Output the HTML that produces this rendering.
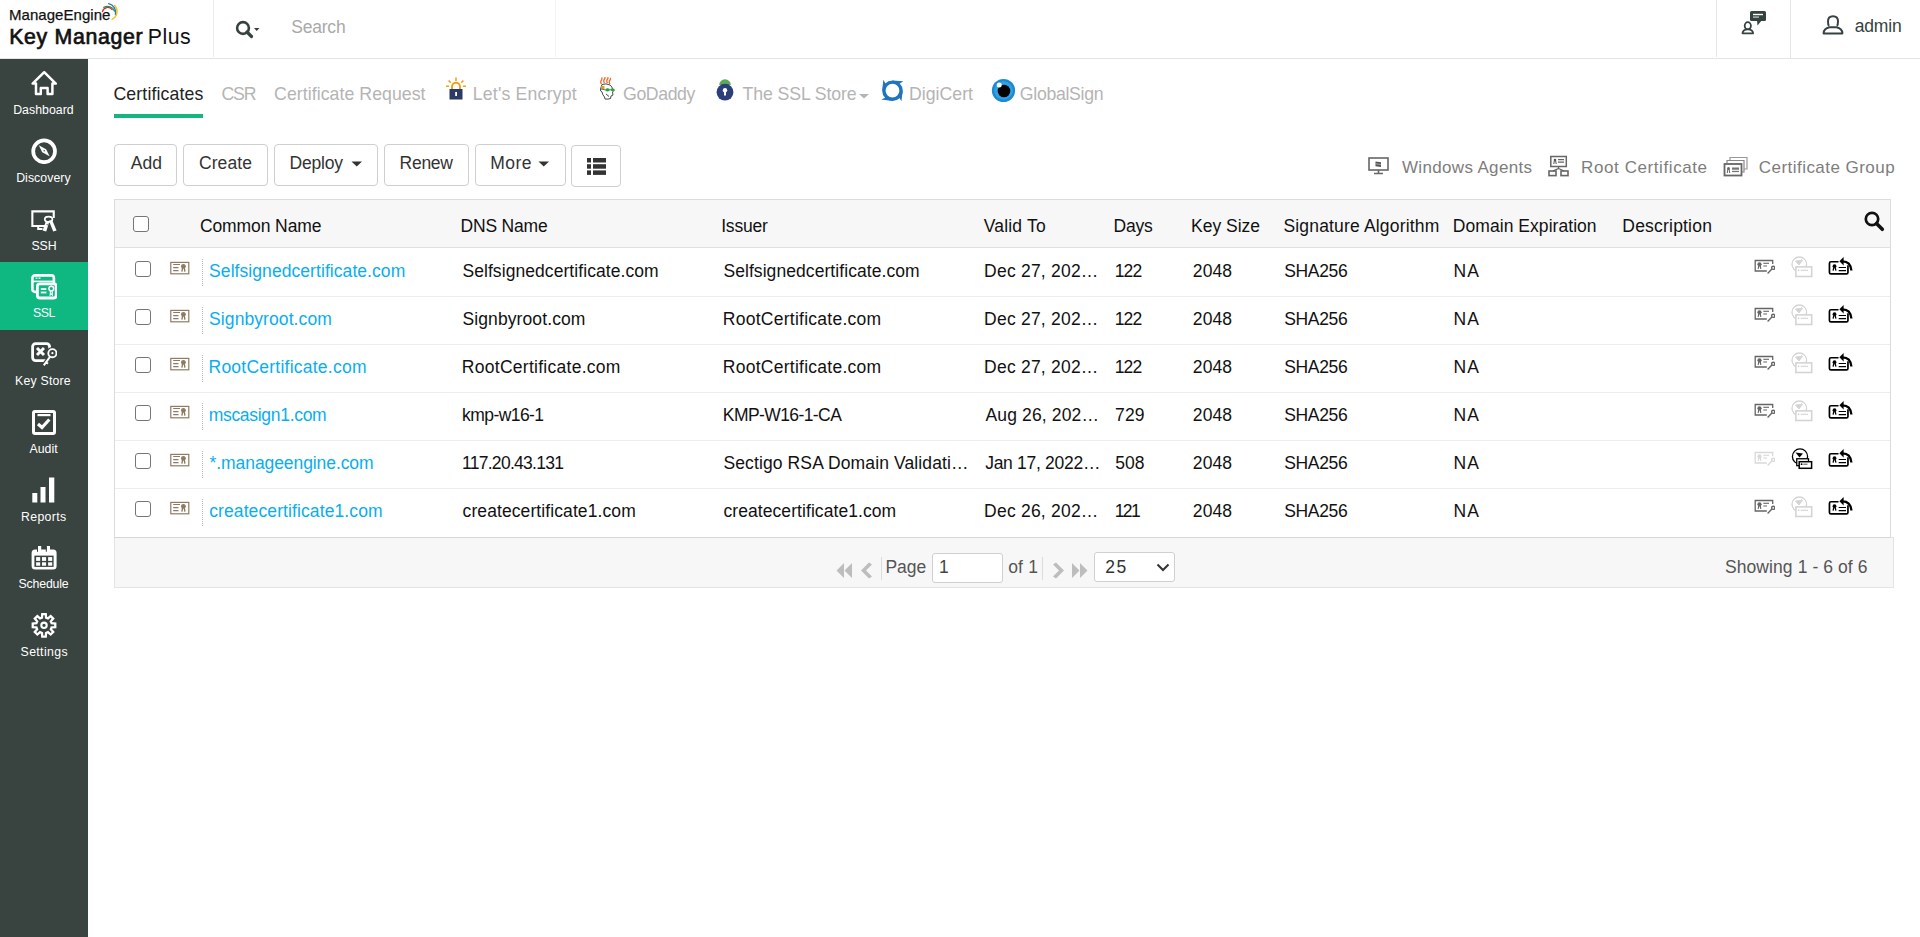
<!DOCTYPE html>
<html><head><meta charset="utf-8"><title>Key Manager Plus</title>
<style>
html,body{margin:0;padding:0;width:1920px;height:937px;overflow:hidden;background:#fff;font-family:"Liberation Sans",sans-serif;}
.t{position:absolute;white-space:nowrap;}
.r{position:absolute;display:block;}
</style></head><body>
<div class="r" style="left:0px;top:58px;width:1920px;height:1px;background:#e4e4e4"></div>
<div class="t" style="left:9.00px;top:7px;font-size:15px;line-height:15px;color:#111;font-weight:normal;letter-spacing:0.045px;-webkit-text-stroke:0.25px #111">ManageEngine</div>
<svg class="r" style="left:96px;top:0px" width="28" height="24" viewBox="0 0 28 24"><g transform="translate(-96 0)" fill="none" stroke-linecap="round">
<path d="M102.4 11.6 A5.6 5.6 0 0 1 112.2 9.6" stroke="#d9293a" stroke-width="1.3"/>
<path d="M103.8 7.4 A7.4 7.4 0 0 1 114.6 11.2" stroke="#1e9a48" stroke-width="1.3"/>
<path d="M108.6 3.6 A9 9 0 0 1 115.4 14.6" stroke="#1f78c1" stroke-width="1.3"/>
<path d="M114.6 5.6 A8.6 8.6 0 0 1 112 19.4" stroke="#f6c21c" stroke-width="1.5"/>
</g></svg>
<div class="t" style="left:9.20px;top:27px;font-size:21.3px;line-height:21.3px;color:#111;font-weight:normal;letter-spacing:0.670px;-webkit-text-stroke:0.7px #111">Key Manager</div>
<div class="t" style="left:147.70px;top:27px;font-size:21.3px;line-height:21.3px;color:#111;font-weight:normal;letter-spacing:0.533px;">Plus</div>
<div class="r" style="left:213px;top:0px;width:1px;height:57px;background:#ececec"></div>
<div class="r" style="left:555px;top:0px;width:1px;height:57px;background:#f3f3f3"></div>
<div class="r" style="left:1716px;top:0px;width:1px;height:57px;background:#e6e6e6"></div>
<div class="r" style="left:1790px;top:0px;width:1px;height:58px;background:#e6e6e6"></div>
<svg class="r" style="left:235px;top:20px" width="26" height="20" viewBox="0 0 26 20">
<circle cx="8" cy="8" r="5.9" stroke="#364240" stroke-width="2.6" fill="none"/>
<path d="M12 12 L16.5 16.5" stroke="#364240" stroke-width="3.2" stroke-linecap="round"/>
<path d="M19 8 L24.5 8 L21.75 11 Z" fill="#364240"/>
</svg>
<div class="t" style="left:291.20px;top:19px;font-size:17.5px;line-height:17.5px;color:#a9a9a9;font-weight:normal;letter-spacing:-0.200px;">Search</div>
<svg class="r" style="left:1741px;top:10px" width="26" height="25" viewBox="0 0 26 25">
<rect x="9" y="1" width="16" height="10" rx="1.5" fill="#364240"/>
<path d="M16 10 L21 10 L16.5 15.5 Z" fill="#364240"/>
<rect x="12" y="3.8" width="10" height="1.4" fill="#fff"/>
<rect x="12" y="6.4" width="6" height="1.4" fill="#bbb"/>
<ellipse cx="6.8" cy="15.8" rx="3.1" ry="3.6" stroke="#364240" stroke-width="1.8" fill="#fff"/>
<path d="M1.5 23.3 Q1.8 19.3 6.8 19.3 Q11.8 19.3 12.1 23.3 Z" stroke="#364240" stroke-width="1.8" fill="#fff" stroke-linejoin="round"/>
</svg>
<svg class="r" style="left:1822px;top:15px" width="22" height="20" viewBox="0 0 22 20">
<path d="M7 11 Q6 10 6 6.3 Q6 1.3 11 1.3 Q16 1.3 16 6.3 Q16 10 15 11" stroke="#364240" stroke-width="2" fill="none"/>
<path d="M1.6 18.4 Q1.8 13.4 7.5 12.3 L14.5 12.3 Q20.2 13.4 20.4 18.4 Z" stroke="#364240" stroke-width="2" fill="none" stroke-linejoin="round"/>
</svg>
<div class="t" style="left:1854.80px;top:18px;font-size:17.5px;line-height:17.5px;color:#364240;font-weight:normal;letter-spacing:-0.200px;">admin</div>
<div class="r" style="left:0px;top:59px;width:88px;height:878px;background:#39433f"></div>
<div class="r" style="left:0px;top:262px;width:88px;height:68px;background:#10b881"></div>
<svg class="r" style="left:31px;top:70px" width="26" height="26" viewBox="0 0 26 26"><path d="M5 24 L5 13.6 L1.6 13.6 L13.2 2.2 L24.8 13.6 L21.4 13.6 L21.4 24 L16.6 24 L16.6 18 L9.8 18 L9.8 24 Z" stroke="#ffffff" stroke-width="2.5" fill="none" stroke-linejoin="round"/></svg>
<div class="t" style="left:13.20px;top:104px;font-size:12.3px;line-height:12.3px;color:#fff;font-weight:normal;letter-spacing:0.038px;">Dashboard</div>
<svg class="r" style="left:31px;top:138px" width="26" height="26" viewBox="0 0 26 26"><circle cx="13.1" cy="13.3" r="10.9" stroke="#ffffff" stroke-width="3.7" fill="none"/>
<path d="M7.8 7.3 L15.1 11.3 L18.6 18.2 L11.2 14.2 Z" fill="#ffffff"/><circle cx="13.2" cy="12.8" r="0.7" fill="#39433f"/></svg>
<div class="t" style="left:16.20px;top:172px;font-size:12.3px;line-height:12.3px;color:#fff;font-weight:normal;letter-spacing:0.050px;">Discovery</div>
<svg class="r" style="left:31px;top:209px" width="26" height="26" viewBox="0 0 26 26"><path d="M15.5 17 L1.35 17 L1.35 2.4 L22.75 2.4 L22.75 9" stroke="#ffffff" stroke-width="2.1" fill="none"/>
<path d="M7.2 17 L7.2 20 L11.5 20" stroke="#ffffff" stroke-width="2" fill="none"/>
<ellipse cx="17.6" cy="10.2" rx="3.8" ry="2.6" stroke="#ffffff" stroke-width="1.7" fill="#39433f"/>
<path d="M14.8 12.2 L18.3 12.8 L15.2 22.6 L11.6 21.6 Z" fill="#ffffff"/>
<path d="M17.8 11.6 L21.2 11.2 L25.6 21.6 L22.2 22.6 Z" fill="#ffffff"/>
<path d="M15.6 15.5 L17.2 16" stroke="#39433f" stroke-width="0.8"/></svg>
<div class="t" style="left:31.50px;top:240px;font-size:12.3px;line-height:12.3px;color:#fff;font-weight:normal;letter-spacing:-0.100px;">SSH</div>
<svg class="r" style="left:31px;top:274px" width="26" height="26" viewBox="0 0 26 26"><rect x="1.4" y="1.4" width="21.5" height="16.5" rx="2.5" stroke="#ffffff" stroke-width="2.6" fill="none"/>
<rect x="2" y="6.6" width="20" height="1.6" fill="#ffffff"/>
<path d="M4.5 4.2 L6.5 4.2 M7.5 4.2 L9.5 4.2" stroke="#ffffff" stroke-width="1.2"/>
<rect x="6.4" y="9.8" width="18.8" height="14.2" rx="2.5" stroke="#ffffff" stroke-width="2.8" fill="#10b881"/>
<rect x="9.8" y="14.2" width="5.6" height="1.8" fill="#ffffff"/><rect x="9.8" y="17.6" width="5.6" height="1.8" fill="#ffffff"/>
<circle cx="20.3" cy="14.6" r="2.4" stroke="#ffffff" stroke-width="1.5" fill="none"/>
<path d="M19.4 16.8 L19.2 21 L20.3 20 L21.4 21 L21.2 16.8" stroke="#ffffff" stroke-width="1.1" fill="none"/></svg>
<div class="t" style="left:33.00px;top:307px;font-size:12.3px;line-height:12.3px;color:#fff;font-weight:normal;letter-spacing:-0.500px;">SSL</div>
<svg class="r" style="left:31px;top:342px" width="26" height="26" viewBox="0 0 26 26"><rect x="1.6" y="1.6" width="17" height="17" rx="3" stroke="#ffffff" stroke-width="2.8" fill="none"/>
<path d="M6 6 L13 13 M13 6 L6 13" stroke="#ffffff" stroke-width="3"/>
<path d="M19.2 14.5 L12.8 23.3" stroke="#39433f" stroke-width="4.5"/>
<circle cx="21.4" cy="11.2" r="4.3" stroke="#39433f" stroke-width="4" fill="#39433f"/>
<circle cx="21.4" cy="11.2" r="4.1" stroke="#ffffff" stroke-width="1.9" fill="#39433f"/>
<circle cx="21.4" cy="11.2" r="1.1" fill="#ffffff"/>
<path d="M19.2 14.5 L12.8 23.3 M15 20.3 L17 21.6" stroke="#ffffff" stroke-width="2.1"/></svg>
<div class="t" style="left:15.10px;top:375px;font-size:12.3px;line-height:12.3px;color:#fff;font-weight:normal;letter-spacing:0.200px;">Key Store</div>
<svg class="r" style="left:31px;top:410px" width="26" height="26" viewBox="0 0 26 26"><rect x="2.5" y="1.5" width="21" height="22" rx="1.5" stroke="#ffffff" stroke-width="3" fill="none"/>
<rect x="6.5" y="4" width="13" height="2.2" fill="#ffffff"/>
<path d="M7 14 L11 17.5 L18.3 9.5" stroke="#ffffff" stroke-width="3.2" fill="none"/></svg>
<div class="t" style="left:29.40px;top:443px;font-size:12.3px;line-height:12.3px;color:#fff;font-weight:normal;letter-spacing:0.050px;">Audit</div>
<svg class="r" style="left:31px;top:477px" width="26" height="26" viewBox="0 0 26 26"><rect x="1.3" y="16" width="5" height="9.5" fill="#ffffff"/><rect x="9.5" y="10" width="5" height="15.5" fill="#ffffff"/><rect x="18" y="0.5" width="5.3" height="25" fill="#ffffff"/></svg>
<div class="t" style="left:21.00px;top:511px;font-size:12.3px;line-height:12.3px;color:#fff;font-weight:normal;letter-spacing:0.350px;">Reports</div>
<svg class="r" style="left:31px;top:546px" width="26" height="26" viewBox="0 0 26 26"><rect x="0.6" y="3.6" width="25" height="20" rx="3.5" fill="#ffffff"/>
<rect x="7" y="0" width="3.2" height="6.2" fill="#ffffff"/><rect x="15.8" y="0" width="3.2" height="6.2" fill="#ffffff"/>
<rect x="6" y="0.8" width="1" height="5" fill="#39433f"/><rect x="14.8" y="0.8" width="1" height="5" fill="#39433f"/>
<rect x="3.4" y="9.6" width="19.2" height="11.3" fill="#39433f"/>
<rect x="5.1" y="11.1" width="4.1" height="3.8" fill="#ffffff"/><rect x="11" y="11.1" width="4.1" height="3.8" fill="#ffffff"/><rect x="17.1" y="11.1" width="4.1" height="3.8" fill="#ffffff"/>
<rect x="5.1" y="16.3" width="4.1" height="3.4" fill="#ffffff"/><rect x="11" y="16.3" width="4.1" height="3.4" fill="#ffffff"/><rect x="17.1" y="16.3" width="4.1" height="3.4" fill="#ffffff"/></svg>
<div class="t" style="left:18.50px;top:578px;font-size:12.3px;line-height:12.3px;color:#fff;font-weight:normal;letter-spacing:-0.157px;">Schedule</div>
<svg class="r" style="left:31px;top:612px" width="26" height="26" viewBox="0 0 26 26"><path d="M10.96 5.67 L11.22 2.04 L14.78 2.04 L15.04 5.67 L16.95 6.46 L19.70 4.08 L22.22 6.60 L19.84 9.35 L20.63 11.26 L24.26 11.52 L24.26 15.08 L20.63 15.34 L19.84 17.25 L22.22 20.00 L19.70 22.52 L16.95 20.14 L15.04 20.93 L14.78 24.56 L11.22 24.56 L10.96 20.93 L9.05 20.14 L6.30 22.52 L3.78 20.00 L6.16 17.25 L5.37 15.34 L1.74 15.08 L1.74 11.52 L5.37 11.26 L6.16 9.35 L3.78 6.60 L6.30 4.08 L9.05 6.46 Z" stroke="#ffffff" stroke-width="2.3" fill="none" stroke-linejoin="miter"/>
<circle cx="13" cy="13.3" r="2.7" stroke="#ffffff" stroke-width="2.1" fill="none"/></svg>
<div class="t" style="left:20.60px;top:646px;font-size:12.3px;line-height:12.3px;color:#fff;font-weight:normal;letter-spacing:0.357px;">Settings</div>
<div class="t" style="left:113.40px;top:86px;font-size:17.7px;line-height:17.7px;color:#222;font-weight:normal;letter-spacing:0.145px;">Certificates</div>
<div class="r" style="left:114px;top:114px;width:89px;height:4px;background:#14b57e"></div>
<div class="t" style="left:221.50px;top:86px;font-size:17.7px;line-height:17.7px;color:#b4b4b4;font-weight:normal;letter-spacing:-1.150px;">CSR</div>
<div class="t" style="left:274.10px;top:86px;font-size:17.7px;line-height:17.7px;color:#b4b4b4;font-weight:normal;letter-spacing:0.056px;">Certificate Request</div>
<svg class="r" style="left:445px;top:77px" width="22" height="24" viewBox="0 0 22 24">
<path d="M11 0.5 L11 4 M3.5 3.5 L5.8 5.8 M18.5 3.5 L16.2 5.8 M1 9.3 L4 9.3 M21 9.3 L18 9.3" stroke="#f4a11a" stroke-width="1.6"/>
<path d="M7 12 L7 9.8 A4 4 0 0 1 15 9.8 L15 12" stroke="#f4a11a" stroke-width="2" fill="none"/>
<rect x="4.5" y="12" width="13" height="10.5" fill="#2b3a67"/>
<rect x="10.2" y="15" width="1.8" height="4" fill="#fff"/>
</svg>
<div class="t" style="left:472.80px;top:86px;font-size:17.7px;line-height:17.7px;color:#b4b4b4;font-weight:normal;letter-spacing:0.183px;">Let's Encrypt</div>
<svg class="r" style="left:597px;top:77px" width="20" height="25" viewBox="0 0 20 25">
<path d="M4.5 7 Q3 5 4.5 3 Q5.5 1.5 4.5 0.5 M7.5 6 Q6 4 7.5 2 Q8.5 0.8 7.5 0 M10.5 6 Q9 4 10.5 2 Q11.5 0.8 10.5 0 M13 7 Q11.5 5 13 3 Q14 1.8 13 1" stroke="#ee6a2a" stroke-width="1.3" fill="none"/>
<path d="M5 7.5 Q9 6 13 8 Q15.5 10 15.5 12 L17 13.5 L15.5 15 L16 18 L14 19 L13.5 21.5 Q11 22.5 8 22 L7.5 20 Q5.5 18 5 15 Q3 14.5 3.5 12 Q4.5 9 5 7.5 Z" stroke="#333" stroke-width="0.9" fill="#fff"/>
<rect x="4.5" y="9" width="3" height="3" fill="#d9a520"/>
<ellipse cx="10.5" cy="12.8" rx="2.4" ry="1.6" fill="#22a33a"/><ellipse cx="15.5" cy="12.8" rx="2.2" ry="1.3" fill="#22a33a"/>
<path d="M8 12.8 L4 12 M12.8 12.8 L13.4 12.8" stroke="#333" stroke-width="0.7"/>
<path d="M9 17 L12 19.5" stroke="#333" stroke-width="0.9"/>
</svg>
<div class="t" style="left:623.10px;top:86px;font-size:17.7px;line-height:17.7px;color:#b4b4b4;font-weight:normal;letter-spacing:-0.417px;">GoDaddy</div>
<svg class="r" style="left:715px;top:77px" width="20" height="25" viewBox="0 0 20 25">
<path d="M4.2 8 A5.8 5.8 0 0 1 15.8 8 Z" fill="#5aa95a"/>
<circle cx="10" cy="15.2" r="8.4" fill="#2c3f7c"/>
<circle cx="10" cy="13.2" r="2.2" fill="#fff"/>
<rect x="9" y="13" width="2" height="5.5" fill="#fff"/>
</svg>
<div class="t" style="left:742.60px;top:86px;font-size:17.7px;line-height:17.7px;color:#b4b4b4;font-weight:normal;letter-spacing:-0.108px;">The SSL Store</div>
<svg class="r" style="left:858px;top:93px" width="12" height="6" viewBox="0 0 12 6"><path d="M1 1 L11 1 L6 5.5 Z" fill="#b4b4b4"/></svg>
<svg class="r" style="left:879px;top:78px" width="26" height="25" viewBox="0 0 26 25">
<circle cx="13.5" cy="12.7" r="8.6" stroke="#1f74c0" stroke-width="3.4" fill="none"/>
<path d="M3.2 13 L7.5 7.2 L4.3 1.8 Z" fill="#1f74c0"/>
<path d="M13 2.4 L19.5 6.2 L24.4 3.2 Z" fill="#1f74c0"/>
<path d="M23.8 12.5 L19.6 18.4 L22.4 23.2 Z" fill="#1f74c0"/>
<path d="M14 23 L7.4 19.3 L2.2 21.4 Z" fill="#1f74c0"/>
</svg>
<div class="t" style="left:909.00px;top:86px;font-size:17.7px;line-height:17.7px;color:#b4b4b4;font-weight:normal;letter-spacing:0.014px;">DigiCert</div>
<svg class="r" style="left:991px;top:78px" width="25" height="25" viewBox="0 0 25 25">
<circle cx="12.5" cy="12.5" r="11.6" fill="#1b8ad0"/>
<circle cx="12.5" cy="12.5" r="9.3" fill="#2fa2e6"/>
<circle cx="13" cy="13" r="6.3" fill="#050505"/>
<circle cx="8.2" cy="7" r="2.5" fill="#fff"/>
</svg>
<div class="t" style="left:1019.80px;top:86px;font-size:17.7px;line-height:17.7px;color:#b4b4b4;font-weight:normal;letter-spacing:-0.300px;">GlobalSign</div>
<div class="r" style="left:114px;top:144px;width:63px;height:42px;border:1px solid #cfcfcf;border-radius:4px;background:#fff;box-sizing:border-box"></div>
<div class="t" style="left:130.80px;top:155px;font-size:17.5px;line-height:17.5px;color:#333;font-weight:normal;">Add</div>
<div class="r" style="left:183px;top:144px;width:85px;height:42px;border:1px solid #cfcfcf;border-radius:4px;background:#fff;box-sizing:border-box"></div>
<div class="t" style="left:198.90px;top:155px;font-size:17.5px;line-height:17.5px;color:#333;font-weight:normal;letter-spacing:0.120px;">Create</div>
<div class="r" style="left:274px;top:144px;width:104px;height:42px;border:1px solid #cfcfcf;border-radius:4px;background:#fff;box-sizing:border-box"></div>
<div class="t" style="left:289.60px;top:155px;font-size:17.5px;line-height:17.5px;color:#333;font-weight:normal;letter-spacing:-0.200px;">Deploy</div>
<svg class="r" style="left:351px;top:161px" width="12" height="6" viewBox="0 0 12 6"><path d="M0.5 0.5 L11 0.5 L5.75 5.5 Z" fill="#333"/></svg>
<div class="r" style="left:384px;top:144px;width:85px;height:42px;border:1px solid #cfcfcf;border-radius:4px;background:#fff;box-sizing:border-box"></div>
<div class="t" style="left:399.60px;top:155px;font-size:17.5px;line-height:17.5px;color:#333;font-weight:normal;letter-spacing:-0.275px;">Renew</div>
<div class="r" style="left:475px;top:144px;width:91px;height:42px;border:1px solid #cfcfcf;border-radius:4px;background:#fff;box-sizing:border-box"></div>
<div class="t" style="left:490.30px;top:155px;font-size:17.5px;line-height:17.5px;color:#333;font-weight:normal;letter-spacing:0.467px;">More</div>
<svg class="r" style="left:538px;top:161px" width="12" height="6" viewBox="0 0 12 6"><path d="M0.5 0.5 L11 0.5 L5.75 5.5 Z" fill="#333"/></svg>
<div class="r" style="left:571px;top:145px;width:50px;height:42px;border:1px solid #cfcfcf;border-radius:4px;background:#fff;box-sizing:border-box"></div>
<svg class="r" style="left:587px;top:158px" width="19" height="17" viewBox="0 0 19 17">
<rect x="0" y="0" width="4" height="4.5" fill="#333"/><rect x="6" y="0" width="13" height="4.5" fill="#333"/>
<rect x="0" y="6.2" width="4" height="4.5" fill="#333"/><rect x="6" y="6.2" width="13" height="4.5" fill="#333"/>
<rect x="0" y="12.4" width="4" height="4.5" fill="#333"/><rect x="6" y="12.4" width="13" height="4.5" fill="#333"/>
</svg>
<svg class="r" style="left:1368px;top:157px" width="22" height="18" viewBox="0 0 22 18">
<rect x="1" y="1" width="19" height="12" stroke="#666" stroke-width="1.6" fill="none"/>
<path d="M10.5 13 L10.5 16 M6 16.5 L15 16.5" stroke="#666" stroke-width="1.6"/>
<path d="M7.5 4.5 L13 5.2 L13 10 L7.5 9.2 Z" fill="#555"/><path d="M7.5 6.8 L13 7.5" stroke="#ddd" stroke-width="0.6"/>
</svg>
<div class="t" style="left:1401.90px;top:159px;font-size:17px;line-height:17px;color:#7d7d7d;font-weight:normal;letter-spacing:0.346px;">Windows Agents</div>
<svg class="r" style="left:1548px;top:155px" width="22" height="22" viewBox="0 0 22 22">
<rect x="2.8" y="1.5" width="15.5" height="10" stroke="#666" stroke-width="1.5" fill="none"/>
<circle cx="7" cy="5" r="1.3" fill="#555"/><path d="M6.3 6 L5.8 9 M7.7 6 L8.2 9" stroke="#555" stroke-width="1"/>
<path d="M10 4.6 L16 4.6 M10 7.2 L16 7.2" stroke="#666" stroke-width="1.2"/>
<path d="M10.5 11.5 L10.5 13.5 L4.8 16 M10.5 13.5 L16.2 16" stroke="#666" stroke-width="1.3" fill="none"/>
<rect x="1" y="16" width="7" height="4.6" stroke="#666" stroke-width="1.6" fill="none"/>
<rect x="13" y="16" width="7" height="4.6" stroke="#666" stroke-width="1.6" fill="none"/>
</svg>
<div class="t" style="left:1581.10px;top:159px;font-size:17px;line-height:17px;color:#7d7d7d;font-weight:normal;letter-spacing:0.587px;">Root Certificate</div>
<svg class="r" style="left:1723px;top:156px" width="26" height="21" viewBox="0 0 26 21">
<path d="M7 4 L7 1.5 L24 1.5 L24 13 L21 13" stroke="#999" stroke-width="1.2" fill="none"/>
<path d="M4 7 L4 4.5 L21 4.5 L21 16 L18 16" stroke="#888" stroke-width="1.2" fill="none"/>
<rect x="1.5" y="8" width="17" height="11.5" stroke="#666" stroke-width="1.8" fill="#fff"/>
<circle cx="5.5" cy="12.5" r="1.5" fill="#666"/><path d="M4.8 13.5 L4.3 17 M6.2 13.5 L6.7 17" stroke="#666" stroke-width="1"/>
<rect x="9" y="11.5" width="7" height="2.2" fill="#777"/><rect x="9" y="14.8" width="7" height="1.3" fill="#777"/>
</svg>
<div class="t" style="left:1758.80px;top:159px;font-size:17px;line-height:17px;color:#7d7d7d;font-weight:normal;letter-spacing:0.456px;">Certificate Group</div>
<div class="r" style="left:114px;top:199px;width:1777px;height:339px;border:1px solid #dcdcdc;border-bottom-color:#d6d6d6;box-sizing:border-box;background:#fff"></div>
<div class="r" style="left:115px;top:200px;width:1775px;height:47px;background:#f7f7f7"></div>
<div class="r" style="left:115px;top:247px;width:1775px;height:1px;background:#e0e0e0"></div>
<div class="r" style="left:133px;top:216px;width:16px;height:16px;border:1px solid #767676;border-radius:3px;background:#fff;box-sizing:border-box"></div>
<div class="t" style="left:199.90px;top:218px;font-size:17.5px;line-height:17.5px;color:#111;font-weight:normal;letter-spacing:-0.090px;">Common Name</div>
<div class="t" style="left:460.60px;top:218px;font-size:17.5px;line-height:17.5px;color:#111;font-weight:normal;letter-spacing:-0.200px;">DNS Name</div>
<div class="t" style="left:721.20px;top:218px;font-size:17.5px;line-height:17.5px;color:#111;font-weight:normal;letter-spacing:-0.200px;">Issuer</div>
<div class="t" style="left:983.65px;top:218px;font-size:17.5px;line-height:17.5px;color:#111;font-weight:normal;letter-spacing:0.207px;">Valid To</div>
<div class="t" style="left:1113.60px;top:218px;font-size:17.5px;line-height:17.5px;color:#111;font-weight:normal;letter-spacing:-0.267px;">Days</div>
<div class="t" style="left:1191.10px;top:218px;font-size:17.5px;line-height:17.5px;color:#111;font-weight:normal;letter-spacing:-0.021px;">Key Size</div>
<div class="t" style="left:1283.45px;top:218px;font-size:17.5px;line-height:17.5px;color:#111;font-weight:normal;letter-spacing:0.169px;">Signature Algorithm</div>
<div class="t" style="left:1452.85px;top:218px;font-size:17.5px;line-height:17.5px;color:#111;font-weight:normal;letter-spacing:0.047px;">Domain Expiration</div>
<div class="t" style="left:1622.35px;top:218px;font-size:17.5px;line-height:17.5px;color:#111;font-weight:normal;letter-spacing:0.200px;">Description</div>
<svg class="r" style="left:1864px;top:211px" width="21" height="21" viewBox="0 0 21 21">
<circle cx="8" cy="8" r="6.2" stroke="#111" stroke-width="2.7" fill="none"/>
<path d="M12.5 12.5 L18.3 18.3" stroke="#111" stroke-width="3.6" stroke-linecap="round"/>
</svg>
<div class="r" style="left:115px;top:296px;width:1775px;height:1px;background:#ededed"></div>
<div class="r" style="left:135px;top:261px;width:16px;height:16px;border:1px solid #767676;border-radius:3px;background:#fff;box-sizing:border-box"></div>
<svg class="r" style="left:169px;top:261px" width="21" height="15" viewBox="0 0 21 15"><rect x="1.8" y="1.4" width="18" height="11.4" stroke="#8f7b5f" stroke-width="1.2" fill="#fff"/>
<path d="M4.2 3.5 L11 3.5 M4.2 6.6 L9.5 6.6 M4.2 9.6 L9.5 9.6" stroke="#8a7a66" stroke-width="1.1"/>
<circle cx="14.4" cy="5.3" r="2.4" fill="#8d7a5f"/><path d="M13.5 7 L12.9 10.7 M15.3 7 L15.9 10.7" stroke="#8d7a5f" stroke-width="1.4"/></svg>
<div class="r" style="left:202px;top:259px;width:1px;height:27px;border-left:1px dotted #b8b8b8;box-sizing:border-box"></div>
<div class="t" style="left:209.10px;top:263px;font-size:17.5px;line-height:17.5px;color:#08aef0;font-weight:normal;letter-spacing:0.067px;">Selfsignedcertificate.com</div>
<div class="t" style="left:462.45px;top:263px;font-size:17.5px;line-height:17.5px;color:#111;font-weight:normal;letter-spacing:0.069px;">Selfsignedcertificate.com</div>
<div class="t" style="left:723.40px;top:263px;font-size:17.5px;line-height:17.5px;color:#111;font-weight:normal;letter-spacing:0.071px;">Selfsignedcertificate.com</div>
<div class="t" style="left:984.10px;top:263px;font-size:17.5px;line-height:17.5px;color:#111;font-weight:normal;letter-spacing:0.218px;">Dec 27, 202…</div>
<div class="t" style="left:1114.70px;top:263px;font-size:17.5px;line-height:17.5px;color:#111;font-weight:normal;letter-spacing:-0.850px;">122</div>
<div class="t" style="left:1192.85px;top:263px;font-size:17.5px;line-height:17.5px;color:#111;font-weight:normal;letter-spacing:0.067px;">2048</div>
<div class="t" style="left:1284.20px;top:263px;font-size:17.5px;line-height:17.5px;color:#111;font-weight:normal;letter-spacing:-0.320px;">SHA256</div>
<div class="t" style="left:1453.60px;top:263px;font-size:17.5px;line-height:17.5px;color:#111;font-weight:normal;letter-spacing:0.950px;">NA</div>
<svg class="r" style="left:1752px;top:258px" width="23" height="17" viewBox="0 0 23 17"><path d="M20.7 6 L20.7 2.5 L3.2 2.5 L3.2 13 L14.8 13" stroke="#666" stroke-width="1.3" fill="none"/>
<circle cx="7.5" cy="6.3" r="2.1" fill="#666"/><path d="M6.8 7.6 L6.2 10.8 M8.2 7.6 L8.8 10.8" stroke="#666" stroke-width="1.2"/>
<path d="M11.3 5.3 L17 5.3" stroke="#666" stroke-width="1.1"/><path d="M11.3 8 L15 8" stroke="#999" stroke-width="1.5"/>
<circle cx="21.2" cy="9.8" r="1.6" stroke="#666" stroke-width="1.4" fill="none"/>
<path d="M19.9 11.1 L15.6 15.5" stroke="#666" stroke-width="1.4"/></svg>
<svg class="r" style="left:1788px;top:254px" width="25" height="24" viewBox="0 0 25 24"><circle cx="11.3" cy="10.3" r="7.3" stroke="#d4d4d4" stroke-width="1.3" fill="#fff"/>
<path d="M7.5 7 L14 6.5 L11 11 Z M13 5.5 L15 7" stroke="#d4d4d4" stroke-width="1" fill="#d4d4d4"/>
<rect x="7.9" y="12.9" width="15.8" height="9.6" stroke="#d4d4d4" stroke-width="1.6" fill="#fff"/>
<rect x="9.8" y="15.5" width="1.6" height="1.6" fill="#d4d4d4"/><path d="M12.6 16.3 L20 16.3" stroke="#d4d4d4" stroke-width="1.1"/></svg>
<svg class="r" style="left:1826px;top:255px" width="28" height="22" viewBox="0 0 28 22"><rect x="3.45" y="6.75" width="18.5" height="12.2" rx="1.5" stroke="#000" stroke-width="1.7" fill="#fff"/>
<rect x="12.5" y="0" width="12" height="10.3" fill="#fff"/>
<circle cx="8.5" cy="11.2" r="1.9" fill="#000"/><path d="M7.8 12.5 L7.1 15.6 M9.2 12.5 L9.9 15.6" stroke="#000" stroke-width="1.3"/>
<path d="M12.7 12.5 L20 12.5 M12.7 15.6 L20 15.6" stroke="#000" stroke-width="1.2"/>
<path d="M16.5 6.3 Q24.6 6.3 25.4 15.5" stroke="#000" stroke-width="2.3" fill="none"/>
<path d="M13.4 6.3 L17.6 2 L17.6 10.5 Z" fill="#000"/></svg>
<div class="r" style="left:115px;top:344px;width:1775px;height:1px;background:#ededed"></div>
<div class="r" style="left:135px;top:309px;width:16px;height:16px;border:1px solid #767676;border-radius:3px;background:#fff;box-sizing:border-box"></div>
<svg class="r" style="left:169px;top:309px" width="21" height="15" viewBox="0 0 21 15"><rect x="1.8" y="1.4" width="18" height="11.4" stroke="#8f7b5f" stroke-width="1.2" fill="#fff"/>
<path d="M4.2 3.5 L11 3.5 M4.2 6.6 L9.5 6.6 M4.2 9.6 L9.5 9.6" stroke="#8a7a66" stroke-width="1.1"/>
<circle cx="14.4" cy="5.3" r="2.4" fill="#8d7a5f"/><path d="M13.5 7 L12.9 10.7 M15.3 7 L15.9 10.7" stroke="#8d7a5f" stroke-width="1.4"/></svg>
<div class="r" style="left:202px;top:307px;width:1px;height:27px;border-left:1px dotted #b8b8b8;box-sizing:border-box"></div>
<div class="t" style="left:209.10px;top:311px;font-size:17.5px;line-height:17.5px;color:#08aef0;font-weight:normal;letter-spacing:0.085px;">Signbyroot.com</div>
<div class="t" style="left:462.45px;top:311px;font-size:17.5px;line-height:17.5px;color:#111;font-weight:normal;letter-spacing:0.108px;">Signbyroot.com</div>
<div class="t" style="left:722.80px;top:311px;font-size:17.5px;line-height:17.5px;color:#111;font-weight:normal;letter-spacing:0.261px;">RootCertificate.com</div>
<div class="t" style="left:984.10px;top:311px;font-size:17.5px;line-height:17.5px;color:#111;font-weight:normal;letter-spacing:0.218px;">Dec 27, 202…</div>
<div class="t" style="left:1114.70px;top:311px;font-size:17.5px;line-height:17.5px;color:#111;font-weight:normal;letter-spacing:-0.850px;">122</div>
<div class="t" style="left:1192.85px;top:311px;font-size:17.5px;line-height:17.5px;color:#111;font-weight:normal;letter-spacing:0.067px;">2048</div>
<div class="t" style="left:1284.20px;top:311px;font-size:17.5px;line-height:17.5px;color:#111;font-weight:normal;letter-spacing:-0.320px;">SHA256</div>
<div class="t" style="left:1453.60px;top:311px;font-size:17.5px;line-height:17.5px;color:#111;font-weight:normal;letter-spacing:0.950px;">NA</div>
<svg class="r" style="left:1752px;top:306px" width="23" height="17" viewBox="0 0 23 17"><path d="M20.7 6 L20.7 2.5 L3.2 2.5 L3.2 13 L14.8 13" stroke="#666" stroke-width="1.3" fill="none"/>
<circle cx="7.5" cy="6.3" r="2.1" fill="#666"/><path d="M6.8 7.6 L6.2 10.8 M8.2 7.6 L8.8 10.8" stroke="#666" stroke-width="1.2"/>
<path d="M11.3 5.3 L17 5.3" stroke="#666" stroke-width="1.1"/><path d="M11.3 8 L15 8" stroke="#999" stroke-width="1.5"/>
<circle cx="21.2" cy="9.8" r="1.6" stroke="#666" stroke-width="1.4" fill="none"/>
<path d="M19.9 11.1 L15.6 15.5" stroke="#666" stroke-width="1.4"/></svg>
<svg class="r" style="left:1788px;top:302px" width="25" height="24" viewBox="0 0 25 24"><circle cx="11.3" cy="10.3" r="7.3" stroke="#d4d4d4" stroke-width="1.3" fill="#fff"/>
<path d="M7.5 7 L14 6.5 L11 11 Z M13 5.5 L15 7" stroke="#d4d4d4" stroke-width="1" fill="#d4d4d4"/>
<rect x="7.9" y="12.9" width="15.8" height="9.6" stroke="#d4d4d4" stroke-width="1.6" fill="#fff"/>
<rect x="9.8" y="15.5" width="1.6" height="1.6" fill="#d4d4d4"/><path d="M12.6 16.3 L20 16.3" stroke="#d4d4d4" stroke-width="1.1"/></svg>
<svg class="r" style="left:1826px;top:303px" width="28" height="22" viewBox="0 0 28 22"><rect x="3.45" y="6.75" width="18.5" height="12.2" rx="1.5" stroke="#000" stroke-width="1.7" fill="#fff"/>
<rect x="12.5" y="0" width="12" height="10.3" fill="#fff"/>
<circle cx="8.5" cy="11.2" r="1.9" fill="#000"/><path d="M7.8 12.5 L7.1 15.6 M9.2 12.5 L9.9 15.6" stroke="#000" stroke-width="1.3"/>
<path d="M12.7 12.5 L20 12.5 M12.7 15.6 L20 15.6" stroke="#000" stroke-width="1.2"/>
<path d="M16.5 6.3 Q24.6 6.3 25.4 15.5" stroke="#000" stroke-width="2.3" fill="none"/>
<path d="M13.4 6.3 L17.6 2 L17.6 10.5 Z" fill="#000"/></svg>
<div class="r" style="left:115px;top:392px;width:1775px;height:1px;background:#ededed"></div>
<div class="r" style="left:135px;top:357px;width:16px;height:16px;border:1px solid #767676;border-radius:3px;background:#fff;box-sizing:border-box"></div>
<svg class="r" style="left:169px;top:357px" width="21" height="15" viewBox="0 0 21 15"><rect x="1.8" y="1.4" width="18" height="11.4" stroke="#8f7b5f" stroke-width="1.2" fill="#fff"/>
<path d="M4.2 3.5 L11 3.5 M4.2 6.6 L9.5 6.6 M4.2 9.6 L9.5 9.6" stroke="#8a7a66" stroke-width="1.1"/>
<circle cx="14.4" cy="5.3" r="2.4" fill="#8d7a5f"/><path d="M13.5 7 L12.9 10.7 M15.3 7 L15.9 10.7" stroke="#8d7a5f" stroke-width="1.4"/></svg>
<div class="r" style="left:202px;top:355px;width:1px;height:27px;border-left:1px dotted #b8b8b8;box-sizing:border-box"></div>
<div class="t" style="left:208.50px;top:359px;font-size:17.5px;line-height:17.5px;color:#08aef0;font-weight:normal;letter-spacing:0.239px;">RootCertificate.com</div>
<div class="t" style="left:461.85px;top:359px;font-size:17.5px;line-height:17.5px;color:#111;font-weight:normal;letter-spacing:0.272px;">RootCertificate.com</div>
<div class="t" style="left:722.80px;top:359px;font-size:17.5px;line-height:17.5px;color:#111;font-weight:normal;letter-spacing:0.261px;">RootCertificate.com</div>
<div class="t" style="left:984.10px;top:359px;font-size:17.5px;line-height:17.5px;color:#111;font-weight:normal;letter-spacing:0.218px;">Dec 27, 202…</div>
<div class="t" style="left:1114.70px;top:359px;font-size:17.5px;line-height:17.5px;color:#111;font-weight:normal;letter-spacing:-0.850px;">122</div>
<div class="t" style="left:1192.85px;top:359px;font-size:17.5px;line-height:17.5px;color:#111;font-weight:normal;letter-spacing:0.067px;">2048</div>
<div class="t" style="left:1284.20px;top:359px;font-size:17.5px;line-height:17.5px;color:#111;font-weight:normal;letter-spacing:-0.320px;">SHA256</div>
<div class="t" style="left:1453.60px;top:359px;font-size:17.5px;line-height:17.5px;color:#111;font-weight:normal;letter-spacing:0.950px;">NA</div>
<svg class="r" style="left:1752px;top:354px" width="23" height="17" viewBox="0 0 23 17"><path d="M20.7 6 L20.7 2.5 L3.2 2.5 L3.2 13 L14.8 13" stroke="#666" stroke-width="1.3" fill="none"/>
<circle cx="7.5" cy="6.3" r="2.1" fill="#666"/><path d="M6.8 7.6 L6.2 10.8 M8.2 7.6 L8.8 10.8" stroke="#666" stroke-width="1.2"/>
<path d="M11.3 5.3 L17 5.3" stroke="#666" stroke-width="1.1"/><path d="M11.3 8 L15 8" stroke="#999" stroke-width="1.5"/>
<circle cx="21.2" cy="9.8" r="1.6" stroke="#666" stroke-width="1.4" fill="none"/>
<path d="M19.9 11.1 L15.6 15.5" stroke="#666" stroke-width="1.4"/></svg>
<svg class="r" style="left:1788px;top:350px" width="25" height="24" viewBox="0 0 25 24"><circle cx="11.3" cy="10.3" r="7.3" stroke="#d4d4d4" stroke-width="1.3" fill="#fff"/>
<path d="M7.5 7 L14 6.5 L11 11 Z M13 5.5 L15 7" stroke="#d4d4d4" stroke-width="1" fill="#d4d4d4"/>
<rect x="7.9" y="12.9" width="15.8" height="9.6" stroke="#d4d4d4" stroke-width="1.6" fill="#fff"/>
<rect x="9.8" y="15.5" width="1.6" height="1.6" fill="#d4d4d4"/><path d="M12.6 16.3 L20 16.3" stroke="#d4d4d4" stroke-width="1.1"/></svg>
<svg class="r" style="left:1826px;top:351px" width="28" height="22" viewBox="0 0 28 22"><rect x="3.45" y="6.75" width="18.5" height="12.2" rx="1.5" stroke="#000" stroke-width="1.7" fill="#fff"/>
<rect x="12.5" y="0" width="12" height="10.3" fill="#fff"/>
<circle cx="8.5" cy="11.2" r="1.9" fill="#000"/><path d="M7.8 12.5 L7.1 15.6 M9.2 12.5 L9.9 15.6" stroke="#000" stroke-width="1.3"/>
<path d="M12.7 12.5 L20 12.5 M12.7 15.6 L20 15.6" stroke="#000" stroke-width="1.2"/>
<path d="M16.5 6.3 Q24.6 6.3 25.4 15.5" stroke="#000" stroke-width="2.3" fill="none"/>
<path d="M13.4 6.3 L17.6 2 L17.6 10.5 Z" fill="#000"/></svg>
<div class="r" style="left:115px;top:440px;width:1775px;height:1px;background:#ededed"></div>
<div class="r" style="left:135px;top:405px;width:16px;height:16px;border:1px solid #767676;border-radius:3px;background:#fff;box-sizing:border-box"></div>
<svg class="r" style="left:169px;top:405px" width="21" height="15" viewBox="0 0 21 15"><rect x="1.8" y="1.4" width="18" height="11.4" stroke="#8f7b5f" stroke-width="1.2" fill="#fff"/>
<path d="M4.2 3.5 L11 3.5 M4.2 6.6 L9.5 6.6 M4.2 9.6 L9.5 9.6" stroke="#8a7a66" stroke-width="1.1"/>
<circle cx="14.4" cy="5.3" r="2.4" fill="#8d7a5f"/><path d="M13.5 7 L12.9 10.7 M15.3 7 L15.9 10.7" stroke="#8d7a5f" stroke-width="1.4"/></svg>
<div class="r" style="left:202px;top:403px;width:1px;height:27px;border-left:1px dotted #b8b8b8;box-sizing:border-box"></div>
<div class="t" style="left:208.70px;top:407px;font-size:17.5px;line-height:17.5px;color:#08aef0;font-weight:normal;letter-spacing:-0.300px;">mscasign1.com</div>
<div class="t" style="left:462.05px;top:407px;font-size:17.5px;line-height:17.5px;color:#111;font-weight:normal;letter-spacing:-0.562px;">kmp-w16-1</div>
<div class="t" style="left:722.80px;top:407px;font-size:17.5px;line-height:17.5px;color:#111;font-weight:normal;letter-spacing:-0.582px;">KMP-W16-1-CA</div>
<div class="t" style="left:985.50px;top:407px;font-size:17.5px;line-height:17.5px;color:#111;font-weight:normal;letter-spacing:0.136px;">Aug 26, 202…</div>
<div class="t" style="left:1115.10px;top:407px;font-size:17.5px;line-height:17.5px;color:#111;font-weight:normal;letter-spacing:0.150px;">729</div>
<div class="t" style="left:1192.85px;top:407px;font-size:17.5px;line-height:17.5px;color:#111;font-weight:normal;letter-spacing:0.067px;">2048</div>
<div class="t" style="left:1284.20px;top:407px;font-size:17.5px;line-height:17.5px;color:#111;font-weight:normal;letter-spacing:-0.320px;">SHA256</div>
<div class="t" style="left:1453.60px;top:407px;font-size:17.5px;line-height:17.5px;color:#111;font-weight:normal;letter-spacing:0.950px;">NA</div>
<svg class="r" style="left:1752px;top:402px" width="23" height="17" viewBox="0 0 23 17"><path d="M20.7 6 L20.7 2.5 L3.2 2.5 L3.2 13 L14.8 13" stroke="#666" stroke-width="1.3" fill="none"/>
<circle cx="7.5" cy="6.3" r="2.1" fill="#666"/><path d="M6.8 7.6 L6.2 10.8 M8.2 7.6 L8.8 10.8" stroke="#666" stroke-width="1.2"/>
<path d="M11.3 5.3 L17 5.3" stroke="#666" stroke-width="1.1"/><path d="M11.3 8 L15 8" stroke="#999" stroke-width="1.5"/>
<circle cx="21.2" cy="9.8" r="1.6" stroke="#666" stroke-width="1.4" fill="none"/>
<path d="M19.9 11.1 L15.6 15.5" stroke="#666" stroke-width="1.4"/></svg>
<svg class="r" style="left:1788px;top:398px" width="25" height="24" viewBox="0 0 25 24"><circle cx="11.3" cy="10.3" r="7.3" stroke="#d4d4d4" stroke-width="1.3" fill="#fff"/>
<path d="M7.5 7 L14 6.5 L11 11 Z M13 5.5 L15 7" stroke="#d4d4d4" stroke-width="1" fill="#d4d4d4"/>
<rect x="7.9" y="12.9" width="15.8" height="9.6" stroke="#d4d4d4" stroke-width="1.6" fill="#fff"/>
<rect x="9.8" y="15.5" width="1.6" height="1.6" fill="#d4d4d4"/><path d="M12.6 16.3 L20 16.3" stroke="#d4d4d4" stroke-width="1.1"/></svg>
<svg class="r" style="left:1826px;top:399px" width="28" height="22" viewBox="0 0 28 22"><rect x="3.45" y="6.75" width="18.5" height="12.2" rx="1.5" stroke="#000" stroke-width="1.7" fill="#fff"/>
<rect x="12.5" y="0" width="12" height="10.3" fill="#fff"/>
<circle cx="8.5" cy="11.2" r="1.9" fill="#000"/><path d="M7.8 12.5 L7.1 15.6 M9.2 12.5 L9.9 15.6" stroke="#000" stroke-width="1.3"/>
<path d="M12.7 12.5 L20 12.5 M12.7 15.6 L20 15.6" stroke="#000" stroke-width="1.2"/>
<path d="M16.5 6.3 Q24.6 6.3 25.4 15.5" stroke="#000" stroke-width="2.3" fill="none"/>
<path d="M13.4 6.3 L17.6 2 L17.6 10.5 Z" fill="#000"/></svg>
<div class="r" style="left:115px;top:488px;width:1775px;height:1px;background:#ededed"></div>
<div class="r" style="left:135px;top:453px;width:16px;height:16px;border:1px solid #767676;border-radius:3px;background:#fff;box-sizing:border-box"></div>
<svg class="r" style="left:169px;top:453px" width="21" height="15" viewBox="0 0 21 15"><rect x="1.8" y="1.4" width="18" height="11.4" stroke="#8f7b5f" stroke-width="1.2" fill="#fff"/>
<path d="M4.2 3.5 L11 3.5 M4.2 6.6 L9.5 6.6 M4.2 9.6 L9.5 9.6" stroke="#8a7a66" stroke-width="1.1"/>
<circle cx="14.4" cy="5.3" r="2.4" fill="#8d7a5f"/><path d="M13.5 7 L12.9 10.7 M15.3 7 L15.9 10.7" stroke="#8d7a5f" stroke-width="1.4"/></svg>
<div class="r" style="left:202px;top:451px;width:1px;height:27px;border-left:1px dotted #b8b8b8;box-sizing:border-box"></div>
<div class="t" style="left:209.60px;top:455px;font-size:17.5px;line-height:17.5px;color:#08aef0;font-weight:normal;letter-spacing:-0.082px;">*.manageengine.com</div>
<div class="t" style="left:461.95px;top:455px;font-size:17.5px;line-height:17.5px;color:#111;font-weight:normal;letter-spacing:-0.708px;">117.20.43.131</div>
<div class="t" style="left:723.40px;top:455px;font-size:17.5px;line-height:17.5px;color:#111;font-weight:normal;letter-spacing:0.122px;">Sectigo RSA Domain Validati…</div>
<div class="t" style="left:985.20px;top:455px;font-size:17.5px;line-height:17.5px;color:#111;font-weight:normal;letter-spacing:-0.292px;">Jan 17, 2022…</div>
<div class="t" style="left:1115.30px;top:455px;font-size:17.5px;line-height:17.5px;color:#111;font-weight:normal;">508</div>
<div class="t" style="left:1192.85px;top:455px;font-size:17.5px;line-height:17.5px;color:#111;font-weight:normal;letter-spacing:0.067px;">2048</div>
<div class="t" style="left:1284.20px;top:455px;font-size:17.5px;line-height:17.5px;color:#111;font-weight:normal;letter-spacing:-0.320px;">SHA256</div>
<div class="t" style="left:1453.60px;top:455px;font-size:17.5px;line-height:17.5px;color:#111;font-weight:normal;letter-spacing:0.950px;">NA</div>
<svg class="r" style="left:1752px;top:450px" width="23" height="17" viewBox="0 0 23 17"><path d="M20.7 6 L20.7 2.5 L3.2 2.5 L3.2 13 L14.8 13" stroke="#d9d9d9" stroke-width="1.3" fill="none"/>
<circle cx="7.5" cy="6.3" r="2.1" fill="#d9d9d9"/><path d="M6.8 7.6 L6.2 10.8 M8.2 7.6 L8.8 10.8" stroke="#d9d9d9" stroke-width="1.2"/>
<path d="M11.3 5.3 L17 5.3" stroke="#d9d9d9" stroke-width="1.1"/><path d="M11.3 8 L15 8" stroke="#e2e2e2" stroke-width="1.5"/>
<circle cx="21.2" cy="9.8" r="1.6" stroke="#d9d9d9" stroke-width="1.4" fill="none"/>
<path d="M19.9 11.1 L15.6 15.5" stroke="#d9d9d9" stroke-width="1.4"/></svg>
<svg class="r" style="left:1788px;top:446px" width="25" height="24" viewBox="0 0 25 24"><circle cx="12" cy="10.5" r="7.6" stroke="#000" stroke-width="1.3" fill="#fff"/>
<path d="M7.5 6.5 L15 7.5 L11.5 11.5 Z" fill="#000"/>
<rect x="8.75" y="12.75" width="11.75" height="6.9" stroke="#000" stroke-width="1.3" fill="#fff"/>
<rect x="11.2" y="15.7" width="12.4" height="6.6" stroke="#000" stroke-width="1.5" fill="#fff"/>
<circle cx="13.6" cy="18.2" r="0.9" fill="#000"/><path d="M15.3 18.2 L19.5 18.2" stroke="#555" stroke-width="1"/></svg>
<svg class="r" style="left:1826px;top:447px" width="28" height="22" viewBox="0 0 28 22"><rect x="3.45" y="6.75" width="18.5" height="12.2" rx="1.5" stroke="#000" stroke-width="1.7" fill="#fff"/>
<rect x="12.5" y="0" width="12" height="10.3" fill="#fff"/>
<circle cx="8.5" cy="11.2" r="1.9" fill="#000"/><path d="M7.8 12.5 L7.1 15.6 M9.2 12.5 L9.9 15.6" stroke="#000" stroke-width="1.3"/>
<path d="M12.7 12.5 L20 12.5 M12.7 15.6 L20 15.6" stroke="#000" stroke-width="1.2"/>
<path d="M16.5 6.3 Q24.6 6.3 25.4 15.5" stroke="#000" stroke-width="2.3" fill="none"/>
<path d="M13.4 6.3 L17.6 2 L17.6 10.5 Z" fill="#000"/></svg>
<div class="r" style="left:135px;top:501px;width:16px;height:16px;border:1px solid #767676;border-radius:3px;background:#fff;box-sizing:border-box"></div>
<svg class="r" style="left:169px;top:501px" width="21" height="15" viewBox="0 0 21 15"><rect x="1.8" y="1.4" width="18" height="11.4" stroke="#8f7b5f" stroke-width="1.2" fill="#fff"/>
<path d="M4.2 3.5 L11 3.5 M4.2 6.6 L9.5 6.6 M4.2 9.6 L9.5 9.6" stroke="#8a7a66" stroke-width="1.1"/>
<circle cx="14.4" cy="5.3" r="2.4" fill="#8d7a5f"/><path d="M13.5 7 L12.9 10.7 M15.3 7 L15.9 10.7" stroke="#8d7a5f" stroke-width="1.4"/></svg>
<div class="r" style="left:202px;top:499px;width:1px;height:27px;border-left:1px dotted #b8b8b8;box-sizing:border-box"></div>
<div class="t" style="left:209.20px;top:503px;font-size:17.5px;line-height:17.5px;color:#08aef0;font-weight:normal;letter-spacing:0.105px;">createcertificate1.com</div>
<div class="t" style="left:462.55px;top:503px;font-size:17.5px;line-height:17.5px;color:#111;font-weight:normal;letter-spacing:0.095px;">createcertificate1.com</div>
<div class="t" style="left:723.50px;top:503px;font-size:17.5px;line-height:17.5px;color:#111;font-weight:normal;letter-spacing:0.069px;">createcertificate1.com</div>
<div class="t" style="left:984.10px;top:503px;font-size:17.5px;line-height:17.5px;color:#111;font-weight:normal;letter-spacing:0.218px;">Dec 26, 202…</div>
<div class="t" style="left:1114.70px;top:503px;font-size:17.5px;line-height:17.5px;color:#111;font-weight:normal;letter-spacing:-1.600px;">121</div>
<div class="t" style="left:1192.85px;top:503px;font-size:17.5px;line-height:17.5px;color:#111;font-weight:normal;letter-spacing:0.067px;">2048</div>
<div class="t" style="left:1284.20px;top:503px;font-size:17.5px;line-height:17.5px;color:#111;font-weight:normal;letter-spacing:-0.320px;">SHA256</div>
<div class="t" style="left:1453.60px;top:503px;font-size:17.5px;line-height:17.5px;color:#111;font-weight:normal;letter-spacing:0.950px;">NA</div>
<svg class="r" style="left:1752px;top:498px" width="23" height="17" viewBox="0 0 23 17"><path d="M20.7 6 L20.7 2.5 L3.2 2.5 L3.2 13 L14.8 13" stroke="#666" stroke-width="1.3" fill="none"/>
<circle cx="7.5" cy="6.3" r="2.1" fill="#666"/><path d="M6.8 7.6 L6.2 10.8 M8.2 7.6 L8.8 10.8" stroke="#666" stroke-width="1.2"/>
<path d="M11.3 5.3 L17 5.3" stroke="#666" stroke-width="1.1"/><path d="M11.3 8 L15 8" stroke="#999" stroke-width="1.5"/>
<circle cx="21.2" cy="9.8" r="1.6" stroke="#666" stroke-width="1.4" fill="none"/>
<path d="M19.9 11.1 L15.6 15.5" stroke="#666" stroke-width="1.4"/></svg>
<svg class="r" style="left:1788px;top:494px" width="25" height="24" viewBox="0 0 25 24"><circle cx="11.3" cy="10.3" r="7.3" stroke="#d4d4d4" stroke-width="1.3" fill="#fff"/>
<path d="M7.5 7 L14 6.5 L11 11 Z M13 5.5 L15 7" stroke="#d4d4d4" stroke-width="1" fill="#d4d4d4"/>
<rect x="7.9" y="12.9" width="15.8" height="9.6" stroke="#d4d4d4" stroke-width="1.6" fill="#fff"/>
<rect x="9.8" y="15.5" width="1.6" height="1.6" fill="#d4d4d4"/><path d="M12.6 16.3 L20 16.3" stroke="#d4d4d4" stroke-width="1.1"/></svg>
<svg class="r" style="left:1826px;top:495px" width="28" height="22" viewBox="0 0 28 22"><rect x="3.45" y="6.75" width="18.5" height="12.2" rx="1.5" stroke="#000" stroke-width="1.7" fill="#fff"/>
<rect x="12.5" y="0" width="12" height="10.3" fill="#fff"/>
<circle cx="8.5" cy="11.2" r="1.9" fill="#000"/><path d="M7.8 12.5 L7.1 15.6 M9.2 12.5 L9.9 15.6" stroke="#000" stroke-width="1.3"/>
<path d="M12.7 12.5 L20 12.5 M12.7 15.6 L20 15.6" stroke="#000" stroke-width="1.2"/>
<path d="M16.5 6.3 Q24.6 6.3 25.4 15.5" stroke="#000" stroke-width="2.3" fill="none"/>
<path d="M13.4 6.3 L17.6 2 L17.6 10.5 Z" fill="#000"/></svg>
<div class="r" style="left:114px;top:538px;width:1780px;height:50px;background:#f7f7f7;border:1px solid #e3e3e3;border-top:none;box-sizing:border-box"></div>
<div class="r" style="left:1890px;top:537px;width:4px;height:1px;background:#e3e3e3"></div>
<svg class="r" style="left:835px;top:562px" width="18" height="17" viewBox="0 0 18 17"><path d="M9 1 L9 16 L1.5 8.5 Z M17 1 L17 16 L9.5 8.5 Z" fill="#bdbdbd"/></svg>
<svg class="r" style="left:859px;top:562px" width="14" height="17" viewBox="0 0 14 17"><path d="M13 2.5 L10 0.5 L2 8.5 L10 16.5 L13 14.5 L7 8.5 Z" fill="#bdbdbd"/></svg>
<div class="r" style="left:881px;top:557px;width:1px;height:23px;background:#dcdcdc"></div>
<div class="t" style="left:885.50px;top:559px;font-size:17.5px;line-height:17.5px;color:#555;font-weight:normal;letter-spacing:-0.067px;">Page</div>
<div class="r" style="left:932px;top:553px;width:71px;height:30px;background:#fff;border:1px solid #d0d0d0;border-radius:3px;box-sizing:border-box"></div>
<div class="t" style="left:939.10px;top:559px;font-size:17.5px;line-height:17.5px;color:#444;font-weight:normal;">1</div>
<div class="t" style="left:1008.20px;top:559px;font-size:17.5px;line-height:17.5px;color:#555;font-weight:normal;letter-spacing:0.200px;">of 1</div>
<div class="r" style="left:1042px;top:557px;width:1px;height:23px;background:#dcdcdc"></div>
<svg class="r" style="left:1052px;top:562px" width="14" height="17" viewBox="0 0 14 17"><path d="M1 2.5 L4 0.5 L12 8.5 L4 16.5 L1 14.5 L7 8.5 Z" fill="#bdbdbd"/></svg>
<svg class="r" style="left:1071px;top:562px" width="18" height="17" viewBox="0 0 18 17"><path d="M1 1 L1 16 L8.5 8.5 Z M9 1 L9 16 L16.5 8.5 Z" fill="#bdbdbd"/></svg>
<div class="r" style="left:1094px;top:552px;width:81px;height:30px;background:#fff;border:1px solid #d0d0d0;border-radius:3px;box-sizing:border-box"></div>
<div class="t" style="left:1105.30px;top:559px;font-size:17.5px;line-height:17.5px;color:#333;font-weight:normal;letter-spacing:1.500px;">25</div>
<svg class="r" style="left:1156px;top:563px" width="14" height="9" viewBox="0 0 14 9"><path d="M1.5 1.5 L7 7 L12.5 1.5" stroke="#333" stroke-width="2" fill="none"/></svg>
<div class="t" style="left:1724.95px;top:559px;font-size:17.5px;line-height:17.5px;color:#555;font-weight:normal;letter-spacing:0.088px;">Showing 1 - 6 of 6</div>
</body></html>
